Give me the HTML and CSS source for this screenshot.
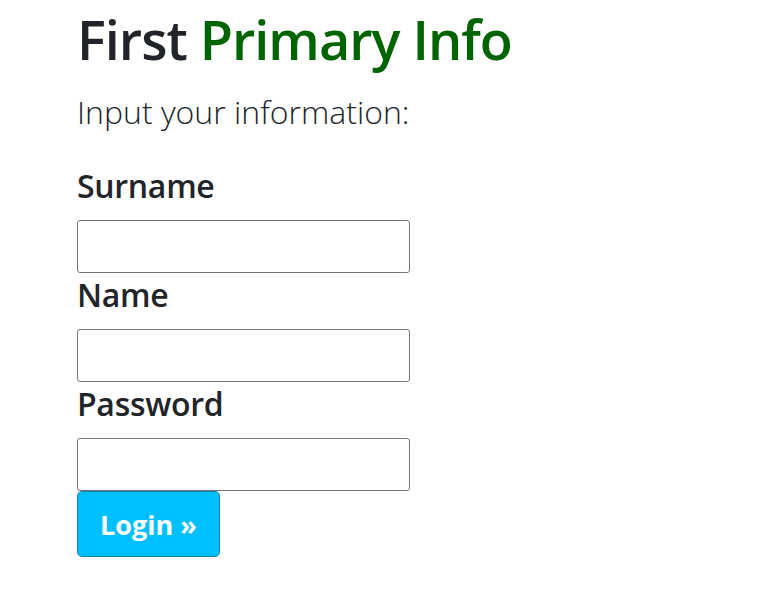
FILE: index.html
```html
<!DOCTYPE html>
<html>
<head>
<meta charset="utf-8">
<link rel="stylesheet" href="styles.css">
</head>
<body>
<div class="container">
  <h1 class="title">First <span class="accent">Primary Info</span></h1>
  <p class="lead">Input your information:</p>
  <form class="form">
    <label class="label" for="surname">Surname</label>
    <input class="field" id="surname" type="text">
    <label class="label" for="name">Name</label>
    <input class="field" id="name" type="text">
    <label class="label" for="password">Password</label>
    <input class="field" id="password" type="password">
    <button class="btn" type="button">Login &raquo;</button>
  </form>
</div>
</body>
</html>
```
FILE: styles.css
```css
html, body {
  margin: 0;
  padding: 0;
  background: #ffffff;
}
body {
  font-family: "Open Sans", "Noto Sans", sans-serif;
  color: #212529;
}
.container {
  padding: 6px 0 0 77px;
}
.title {
  margin: 0;
  font-size: 54px;
  font-weight: 600;
  letter-spacing: -1px;
  line-height: 67px;
  color: #212529;
}
.accent {
  color: #006400;
}
.lead {
  margin: 19px 0 0 0;
  font-size: 32px;
  font-weight: 300;
  line-height: 40px;
}
.form {
  display: flex;
  flex-direction: column;
  align-items: flex-start;
  margin-top: 32px;
}
.label {
  display: block;
  font-size: 32px;
  font-weight: 600;
  letter-spacing: -0.3px;
  line-height: 43px;
  margin-bottom: 13px;
}
.field {
  box-sizing: border-box;
  width: 333px;
  height: 53px;
  margin: 0;
  border: 1px solid #767676;
  border-radius: 3px;
  background: #fff;
  font-size: 20px;
}
.btn {
  box-sizing: border-box;
  width: 143px;
  height: 66px;
  margin: 0;
  background: #00bfff;
  border: 1px solid #1a7fa8;
  border-radius: 5px;
  color: #ffffff;
  font-family: "Open Sans", "Noto Sans", sans-serif;
  font-size: 27px;
  font-weight: 700;
  padding: 0;
}
```
